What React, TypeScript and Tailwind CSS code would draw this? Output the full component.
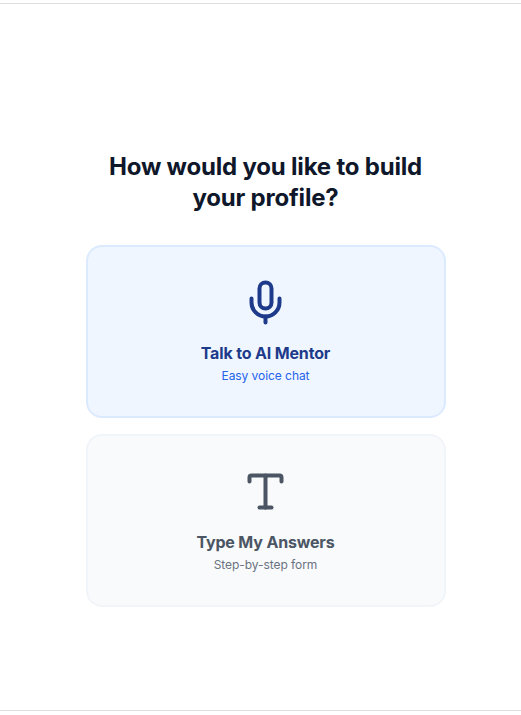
import React from "react";
import { Mic, Type } from "lucide-react";

export default function App() {
  return (
    <div className="flex h-[715px] flex-col bg-white pt-[3px] pb-1 font-['Inter',sans-serif]">
      <main className="flex flex-1 flex-col items-center border-y border-[#dedede] pt-[147px] pl-[10px]">
        <h1 className="w-[360px] text-center text-2xl leading-[31px] font-bold tracking-[-0.2px] text-[#0f172a]">
          How would you like to build your profile?
        </h1>
        <div className="mt-8 flex w-[360px] flex-col gap-4">
          <button className="flex h-[173px] flex-col items-center rounded-2xl border-2 border-[#dbeafe] bg-[#eff6ff] pt-8">
            <Mic size={48} className="-translate-x-[0.5px] -translate-y-[0.5px] text-[#1e3a8a]" />
            <span className="mt-[14px] text-base leading-6 font-bold tracking-[-0.16px] text-[#1e3a8a]">Talk to AI Mentor</span>
            <span className="mt-[3px] text-xs leading-4 tracking-[-0.06px] text-[#2563eb]">Easy voice chat</span>
          </button>
          <button className="flex h-[173px] flex-col items-center rounded-2xl border-2 border-[#f1f5f9] bg-[#f8fafc] pt-8">
            <Type size={48} className="-translate-x-[0.5px] -translate-y-[0.5px] text-[#4b5563]" />
            <span className="mt-[14px] text-base leading-6 font-bold tracking-[-0.16px] text-[#4b5563]">Type My Answers</span>
            <span className="mt-[3px] text-xs leading-4 tracking-[-0.06px] text-[#6b7280]">Step-by-step form</span>
          </button>
        </div>
      </main>
    </div>
  );
}
